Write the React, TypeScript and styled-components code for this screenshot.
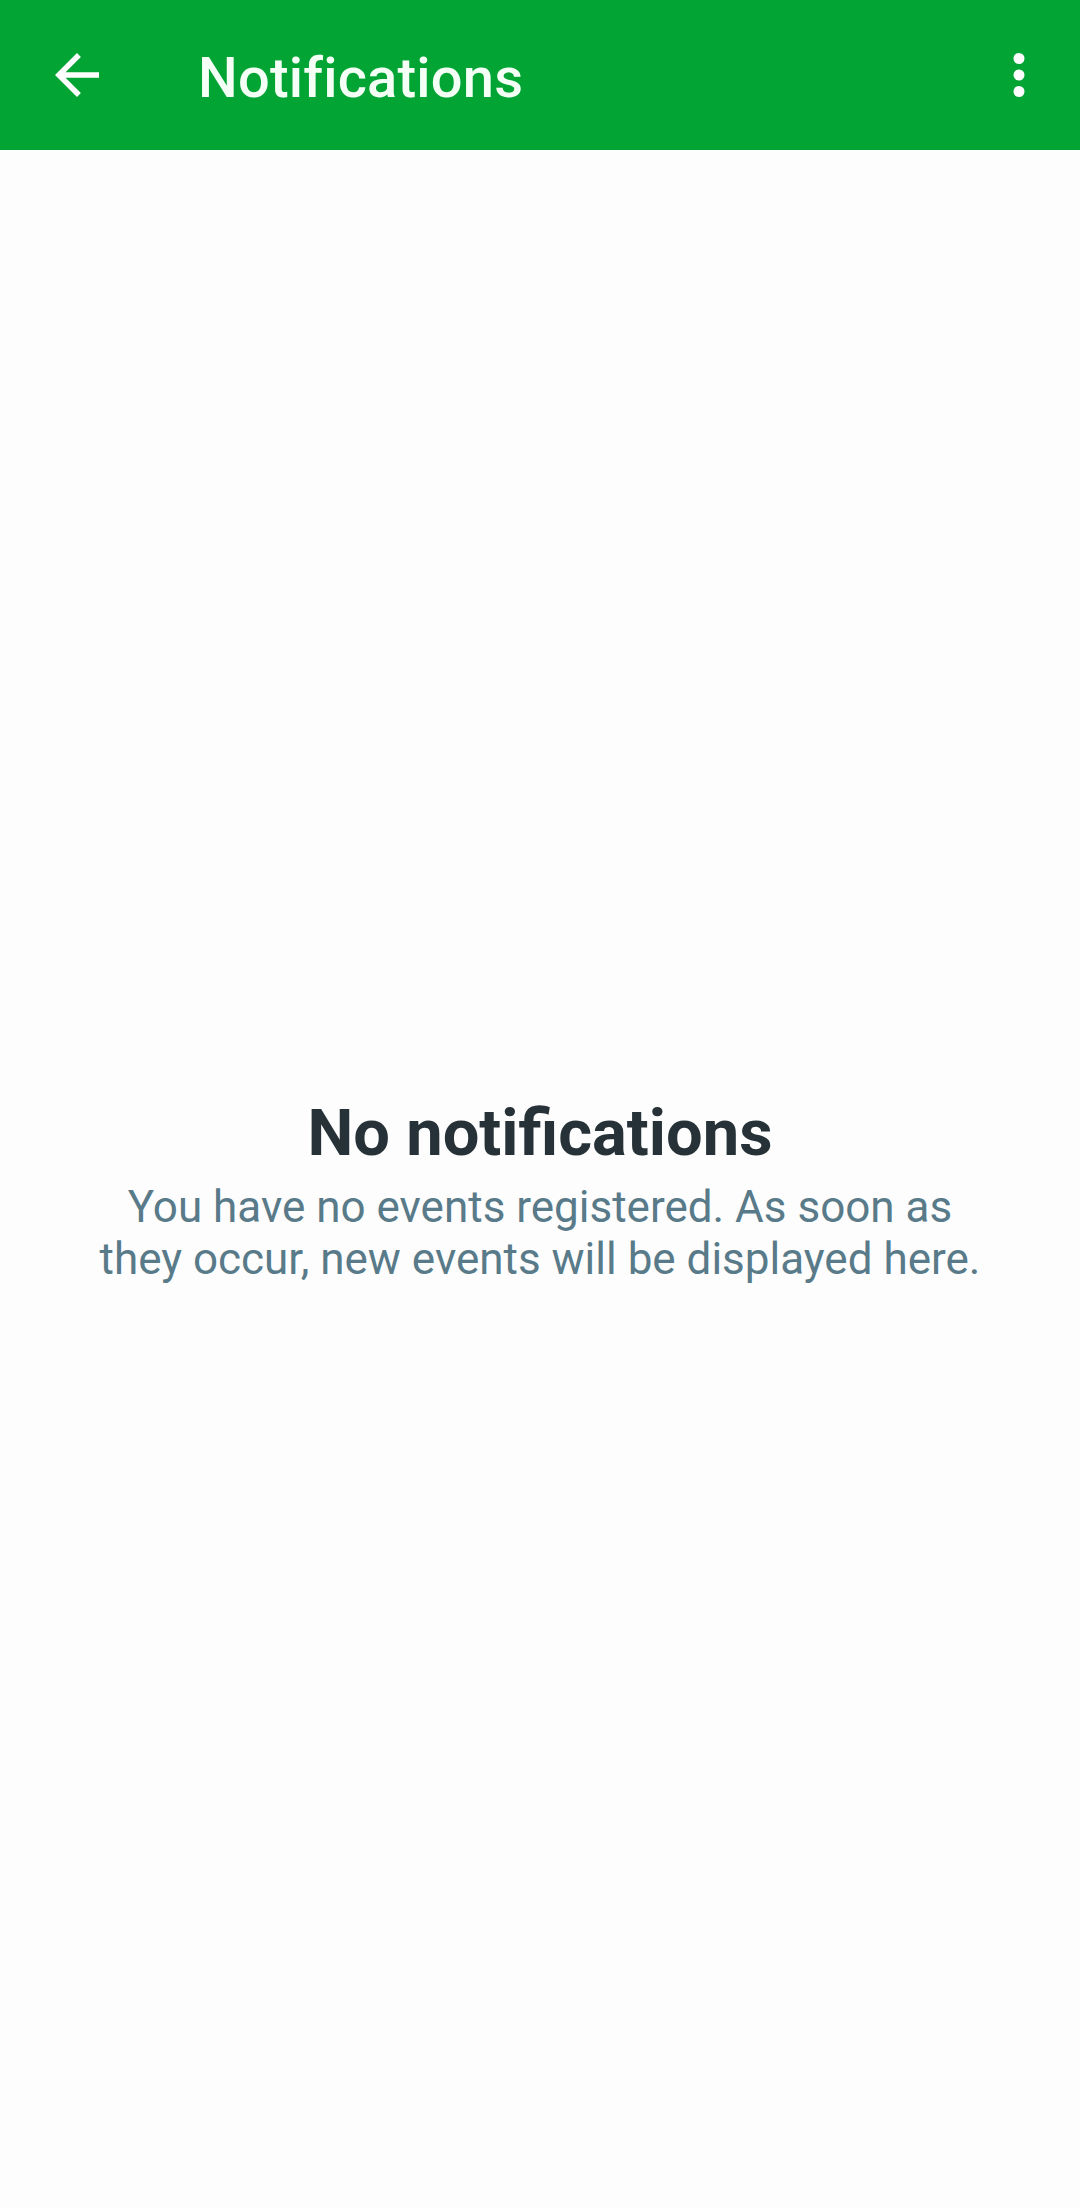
import React from "react";
import styled, { createGlobalStyle } from "styled-components";

const GlobalStyle = createGlobalStyle`
  html, body {
    margin: 0;
    padding: 0;
    background: #fdfdfd;
    font-family: Roboto, "Noto Sans", "Liberation Sans", sans-serif;
  }
`;

const Screen = styled.div`
  display: flex;
  flex-direction: column;
  width: 1080px;
  min-height: 2208px;
  background: #fdfdfd;
`;

const Toolbar = styled.header`
  display: flex;
  align-items: center;
  height: 150px;
  padding: 0 28px 0 44px;
  box-sizing: border-box;
  background: #02a434;
  color: #ffffff;
`;

const IconButton = styled.button`
  display: flex;
  align-items: center;
  justify-content: center;
  width: 66px;
  height: 66px;
  padding: 0;
  border: none;
  background: transparent;
  color: inherit;
`;

const Title = styled.h1`
  flex: 1;
  margin: 6px 0 0 88px;
  font-size: 56px;
  font-weight: 500;
  line-height: 66px;
  color: #f4fff6;
  letter-spacing: 0.2px;
`;

const Content = styled.main`
  flex: 1;
  display: flex;
  flex-direction: column;
  align-items: center;
  justify-content: center;
  padding: 20px 88px 0;
`;

const EmptyTitle = styled.h2`
  margin: 0;
  font-size: 65px;
  font-weight: 700;
  line-height: 80px;
  color: #263238;
  text-align: center;
`;

const EmptyText = styled.p`
  margin: 8px 0 0;
  font-size: 44px;
  font-weight: 400;
  line-height: 52px;
  color: #587a89;
  text-align: center;
`;

const BackIcon = () => (
  <svg width="66" height="66" viewBox="0 0 24 24" fill="currentColor">
    <path d="M20 11H7.83l5.59-5.59L12 4l-8 8 8 8 1.41-1.41L7.83 13H20v-2z" />
  </svg>
);

const MoreIcon = () => (
  <svg width="66" height="66" viewBox="0 0 24 24" fill="currentColor">
    <circle cx="12" cy="6" r="2" />
    <circle cx="12" cy="12" r="2" />
    <circle cx="12" cy="18" r="2" />
  </svg>
);

export default function App() {
  return (
    <>
      <GlobalStyle />
      <Screen>
        <Toolbar>
          <IconButton aria-label="Back">
            <BackIcon />
          </IconButton>
          <Title>Notifications</Title>
          <IconButton aria-label="More options">
            <MoreIcon />
          </IconButton>
        </Toolbar>
        <Content>
          <EmptyTitle>No notifications</EmptyTitle>
          <EmptyText>
            You have no events registered. As soon as they occur, new events
            will be displayed here.
          </EmptyText>
        </Content>
      </Screen>
    </>
  );
}
